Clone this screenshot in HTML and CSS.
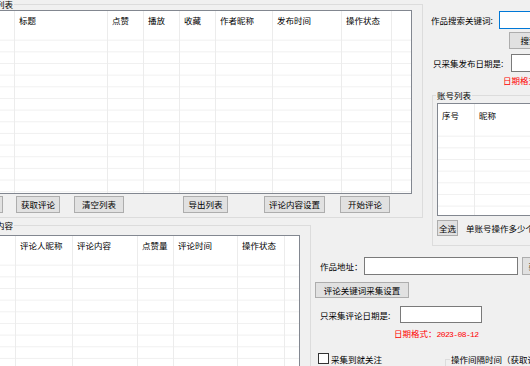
FILE: index.html
```html
<!DOCTYPE html>
<html lang="zh-CN">
<head>
<meta charset="utf-8">
<title>作品评论工具</title>
<link rel="stylesheet" href="styles.css">
</head>
<body>
<div class="app">
  <section class="group works">
    <span class="group-title">作品列表</span>
    <div class="listview lv-works">
      <div class="col"><div class="th">序号</div></div>
      <div class="col"><div class="th">标题</div></div>
      <div class="col"><div class="th">点赞</div></div>
      <div class="col"><div class="th">播放</div></div>
      <div class="col"><div class="th">收藏</div></div>
      <div class="col"><div class="th">作者昵称</div></div>
      <div class="col"><div class="th">发布时间</div></div>
      <div class="col"><div class="th">操作状态</div></div>
      <div class="col filler"><div class="th"></div></div>
    </div>
    <div class="btn-row">
      <button class="btn b-login">登录</button>
      <button class="btn b-fetch">获取评论</button>
      <button class="btn b-clear">清空列表</button>
      <button class="btn b-export">导出列表</button>
      <button class="btn b-setting">评论内容设置</button>
      <button class="btn b-start">开始评论</button>
    </div>
  </section>

  <aside class="side">
    <div class="field kw-row">
      <label class="lbl lbl-kw">作品搜索关键词:</label>
      <span class="input focus kw-input"></span>
    </div>
    <button class="btn b-search">搜索</button>
    <div class="field pdate-row">
      <label class="lbl lbl-pdate">只采集发布日期是:</label>
      <span class="input pdate-input"></span>
    </div>
    <div class="hint hint-pdate">日期格式：<span class="date">2023-08-12</span></div>
    <section class="group accounts">
      <span class="group-title">账号列表</span>
      <div class="listview lv-accounts">
        <div class="col"><div class="th">序号</div></div>
        <div class="col filler"><div class="th">昵称</div></div>
      </div>
      <div class="sel-row">
        <button class="btn b-all">全选</button>
        <span class="sel-text">单账号操作多少个作品</span>
      </div>
    </section>
  </aside>

  <section class="group comments">
    <span class="group-title">评论内容</span>
    <div class="listview lv-comments">
      <div class="col"><div class="th">序号</div></div>
      <div class="col"><div class="th">评论人昵称</div></div>
      <div class="col"><div class="th">评论内容</div></div>
      <div class="col"><div class="th">点赞量</div></div>
      <div class="col"><div class="th">评论时间</div></div>
      <div class="col"><div class="th">操作状态</div></div>
      <div class="col filler"><div class="th"></div></div>
    </div>
  </section>

  <div class="form">
    <div class="field addr-row">
      <label class="lbl lbl-addr">作品地址：</label>
      <span class="input addr-input"></span>
      <button class="btn b-get">获取</button>
    </div>
    <button class="btn b-kwset">评论关键词采集设置</button>
    <div class="field cdate-row">
      <label class="lbl lbl-cdate">只采集评论日期是:</label>
      <span class="input cdate-input"></span>
    </div>
    <div class="hint hint-cdate">日期格式：<span class="date">2023-08-12</span></div>
    <div class="opt-row">
      <label class="check"><span class="cb"></span>采集到就关注</label>
      <section class="group interval">
        <span class="group-title">操作间隔时间（获取评论）</span>
      </section>
    </div>
  </div>
</div>
</body>
</html>
```
FILE: styles.css
```css
* { box-sizing: border-box; }

body {
  margin: 0;
  width: 530px;
  height: 366px;
  overflow: hidden;
  background: #f0f0f0;
  font-family: "Noto Sans CJK SC", "Microsoft YaHei", sans-serif;
  font-size: 8.5px;
  color: #000;
}

.app {
  display: grid;
  grid-template-columns: 351px 112px 160px;
  grid-template-rows: 218px 25px 123px;
  width: 623px;
  height: 366px;
  margin-left: -40px;
}

/* group boxes */
.group {
  position: relative;
  border: 1px solid #dcdcdc;
}
.group-title {
  position: absolute;
  top: -6px;
  left: 17px;
  padding: 0 1px;
  line-height: 11px;
  background: #f0f0f0;
  white-space: nowrap;
}

/* list views */
.listview {
  display: grid;
  border: 1px solid #828790;
  background: #fff linear-gradient(to bottom, transparent 10.67px, #f0f0f0 10.67px) 0 18px / 100% 11.67px repeat-y;
  overflow: hidden;
}
.col { border-right: 1px solid #ececec; }
.col.filler { border-right: 0; }
.th {
  height: 18px;
  line-height: 18px;
  padding-left: 4px;
  background: #fff;
  white-space: nowrap;
  overflow: hidden;
}

/* buttons */
.btn {
  height: 17px;
  padding: 0;
  border: 1px solid #adadad;
  background: #e1e1e1;
  font: inherit;
  line-height: 15px;
  color: #000;
  white-space: nowrap;
  overflow: hidden;
}

/* inputs */
.field { display: flex; align-items: center; }
.lbl { white-space: nowrap; flex: none; }
.input {
  display: block;
  height: 18px;
  border: 1px solid #7a7a7a;
  background: #fff;
  flex: none;
}
.input.focus { border-color: #0078d7; }

.hint {
  line-height: 10px;
  color: #ff0000;
  white-space: nowrap;
}
.date {
  font-family: "Liberation Mono", monospace;
  font-size: 8px;
  letter-spacing: -0.6px;
}

/* top: works */
.works {
  grid-column: 1 / 3;
  grid-row: 1;
  margin-top: 4px;
  padding: 5px 10px 0 8px;
}
.lv-works {
  height: 184px;
  grid-template-columns: 45px 93px 36px 36px 36px 57px 69px 50px 1fr;
}
.btn-row { display: flex; margin-top: 2px; }
.b-login { width: 34px; }
.b-fetch { width: 44px; margin-left: 13px; }
.b-clear { width: 50px; margin-left: 14px; }
.b-export { width: 45px; margin-left: 59px; }
.b-setting { width: 61px; margin-left: 36px; }
.b-start { width: 50px; margin-left: 15px; }

/* right side panel */
.side {
  grid-column: 3;
  grid-row: 1 / 3;
  display: flex;
  flex-direction: column;
  align-items: flex-start;
}
.side > *, .form > * { flex-shrink: 0; }
.kw-row { margin: 11px 0 0 8px; }
.lbl-kw { width: 68px; }
.kw-input { width: 100px; }
.b-search { width: 40px; margin: 3px 0 0 86px; }
.pdate-row { margin: 5px 0 0 10px; }
.lbl-pdate { width: 78px; }
.pdate-input { width: 100px; }
.hint-pdate { margin: 3px 0 0 80px; }

.accounts {
  width: 130px;
  height: 151px;
  margin: 8px 0 0 9px;
  padding: 7px 0 0 4px;
}
.accounts .group-title { left: 3px; }
.lv-accounts {
  height: 113px;
  width: 130px;
  grid-template-columns: 37px 1fr;
  background-position: 0 21px;
}
.lv-accounts .th { height: 21px; line-height: 22px; }
.sel-row {
  display: flex;
  align-items: center;
  margin-top: 4px;
}
.b-all { width: 21px; height: 16px; line-height: 14px; }
.sel-text { margin-left: 8px; white-space: nowrap; }

/* bottom: comments */
.comments {
  grid-column: 1;
  grid-row: 2 / 4;
  align-self: start;
  height: 170px;
  margin-top: 7px;
  padding: 9px 10px 0 8px;
}
.lv-comments {
  height: 150px;
  grid-template-columns: 46px 57px 65px 36px 64px 47px 1fr;
}

/* bottom form */
.form {
  grid-column: 2 / 4;
  grid-row: 3;
  display: flex;
  flex-direction: column;
  align-items: flex-start;
}
.addr-row { margin: 14px 0 0 9px; }
.lbl-addr { width: 44px; }
.addr-input { width: 154px; }
.b-get { width: 30px; height: 18px; margin-left: 4px; }
.b-kwset { width: 94px; height: 16px; line-height: 14px; margin: 7px 0 0 4px; }
.cdate-row { margin: 8px 0 0 9px; }
.lbl-cdate { width: 80px; }
.cdate-input { width: 82px; height: 17px; }
.hint-cdate { margin: 5px 0 0 83px; }

.opt-row {
  display: flex;
  align-items: flex-start;
  margin-top: 12px;
}
.check {
  display: flex;
  align-items: center;
  gap: 2px;
  width: 127px;
  height: 13px;
  margin-left: 7px;
  white-space: nowrap;
}
.cb {
  width: 11px;
  height: 11px;
  border: 1px solid #333;
  background: #fff;
  flex: none;
}
.interval {
  width: 120px;
  height: 30px;
  margin-top: 7px;
}
.interval .group-title { left: 4px; }
```
